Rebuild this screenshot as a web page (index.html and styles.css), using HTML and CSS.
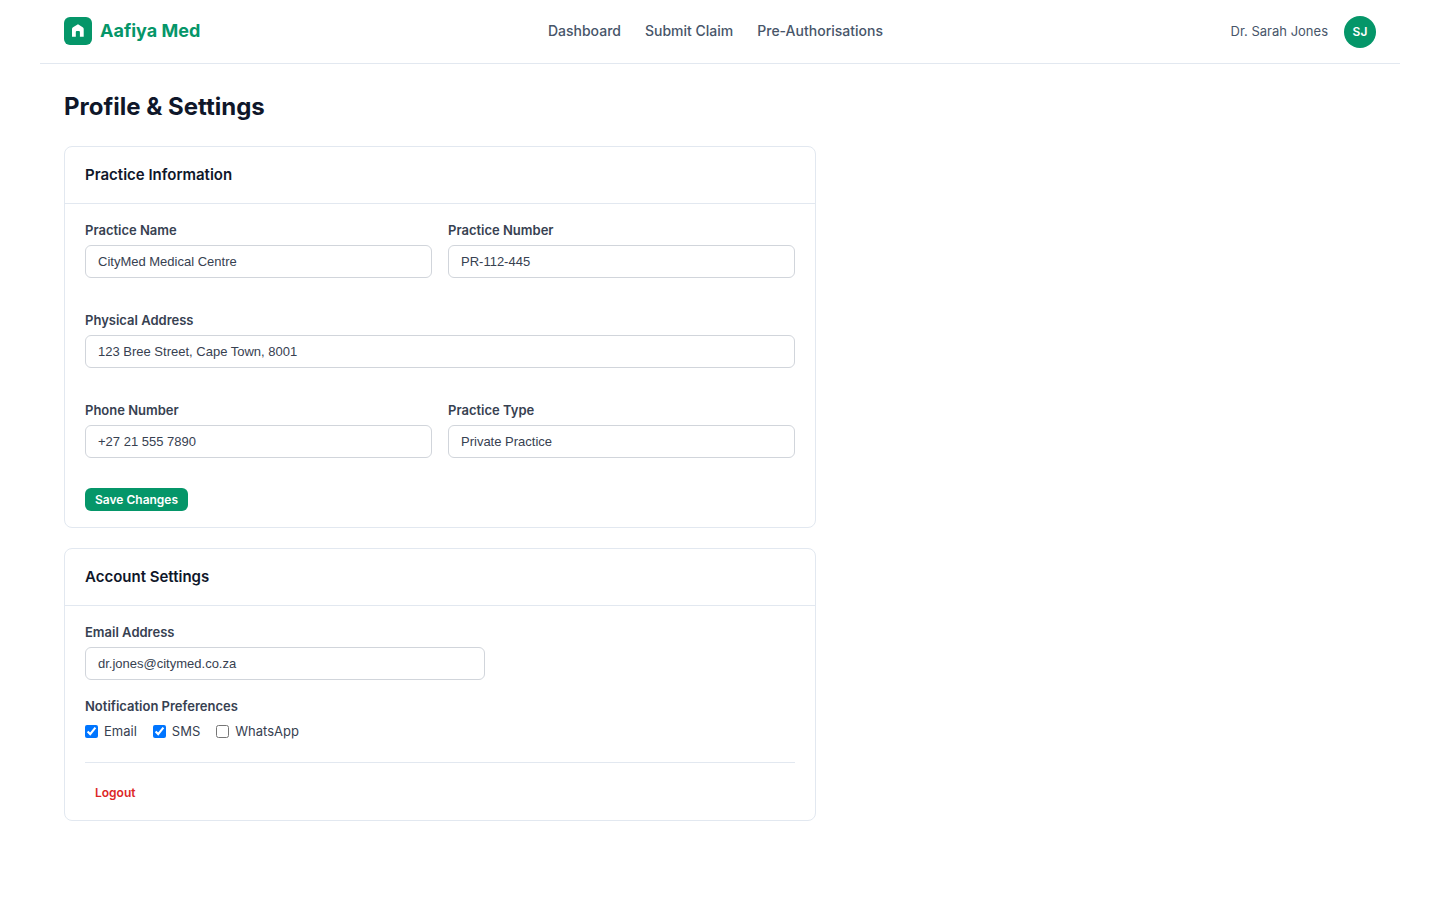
FILE: index.html
```html
<!DOCTYPE html>
<html lang="en">
<head>
  <meta charset="UTF-8">
  <title>Aafiya Med - Profile &amp; Settings</title>
  <link rel="stylesheet" href="styles.css">
</head>

<body>
  <div class="container">
    <header class="header">
      <div class="logo">
        <div class="logo-icon">
          <svg width="16" height="16" viewBox="0 0 16 16" fill="white">
            <path d="M8 1.2L3 4.2Q2 4.8 2 6v7.7h3.8V9q0-1 1-1h2.1q1 0 1 1v4.7h3.8V6q0-1.2-1-1.8z"/>
          </svg>
        </div>
        <span>Aafiya Med</span>
      </div>

      <nav class="nav">
        <a href="#">Dashboard</a>
        <a href="#">Submit Claim</a>
        <a href="#">Pre-Authorisations</a>
      </nav>

      <div class="user">
        <span class="user-name">Dr. Sarah Jones</span>
        <div class="avatar">SJ</div>
      </div>
    </header>

    <main class="main">
      <h1>Profile &amp; Settings</h1>

      <section class="card">
        <div class="card-header">
          <h2>Practice Information</h2>
        </div>
        <div class="card-body">
          <div class="form-grid">
            <div class="form-group">
              <label for="practiceName">Practice Name</label>
              <input type="text" id="practiceName" value="CityMed Medical Centre">
            </div>
            <div class="form-group">
              <label for="practiceNumber">Practice Number</label>
              <input type="text" id="practiceNumber" value="PR-112-445">
            </div>
            <div class="form-group full">
              <label for="address">Physical Address</label>
              <input type="text" id="address" value="123 Bree Street, Cape Town, 8001">
            </div>
            <div class="form-group">
              <label for="phone">Phone Number</label>
              <input type="text" id="phone" value="+27 21 555 7890">
            </div>
            <div class="form-group">
              <label for="practiceType">Practice Type</label>
              <input type="text" id="practiceType" value="Private Practice">
            </div>
          </div>
          <button class="btn btn-primary">Save Changes</button>
        </div>
      </section>

      <section class="card">
        <div class="card-header">
          <h2>Account Settings</h2>
        </div>
        <div class="card-body">
          <div class="form-group email">
            <label for="email">Email Address</label>
            <input type="email" id="email" value="dr.jones@citymed.co.za">
          </div>
          <div class="form-group">
            <label>Notification Preferences</label>
            <div class="checkboxes">
              <label class="check"><input type="checkbox" checked> Email</label>
              <label class="check"><input type="checkbox" checked> SMS</label>
              <label class="check"><input type="checkbox"> WhatsApp</label>
            </div>
          </div>
          <div class="card-footer">
            <button class="btn btn-logout">Logout</button>
          </div>
        </div>
      </section>
    </main>
  </div>
</body>
</html>
```
FILE: styles.css
```css
* {
  margin: 0;
  padding: 0;
  box-sizing: border-box;
}

body {
  font-family: Inter, sans-serif;
  font-size: 14px;
  line-height: 1.5;
  color: #374151;
  background: #ffffff;
}

.container {
  max-width: 1360px;
  margin: 0 auto;
}

/* Header */
.header {
  display: flex;
  align-items: center;
  justify-content: space-between;
  height: 64px;
  padding: 0 24px;
  border-bottom: 1px solid #e2e8f0;
}

.logo {
  display: flex;
  align-items: center;
  gap: 8px;
  margin-bottom: 2px;
  font-size: 18px;
  font-weight: 700;
  color: #059669;
}

.logo-icon {
  display: flex;
  align-items: center;
  justify-content: center;
  width: 28px;
  height: 28px;
  background: #059669;
  border-radius: 6px;
}

.nav {
  display: flex;
  gap: 24px;
  margin-bottom: 2px;
}

.nav a {
  color: #475569;
  font-weight: 500;
  text-decoration: none;
}

.user {
  display: flex;
  align-items: center;
  gap: 16px;
}

.user-name {
  font-size: 13px;
  color: #475569;
}

.avatar {
  display: flex;
  align-items: center;
  justify-content: center;
  width: 32px;
  height: 32px;
  border-radius: 50%;
  background: #059669;
  color: white;
  font-size: 12px;
  font-weight: 600;
}

/* Page */
.main {
  padding: 24px;
}

h1 {
  margin-bottom: 20px;
  font-size: 24px;
  font-weight: 700;
  line-height: 38px;
  color: #0f172a;
}

.card {
  width: 752px;
  margin-bottom: 20px;
  border: 1px solid #e2e8f0;
  border-radius: 8px;
}

.card-header {
  display: flex;
  align-items: center;
  height: 57px;
  padding: 0 20px;
  border-bottom: 1px solid #e2e8f0;
}

h2 {
  font-size: 15px;
  font-weight: 600;
  color: #0f172a;
}

.card-body {
  padding: 16px 20px;
}

/* Forms */
.form-grid {
  display: grid;
  grid-template-columns: 1fr 1fr;
  gap: 32px 16px;
  margin-bottom: 30px;
}

.form-group.full {
  grid-column: 1 / -1;
}

.form-group.email {
  max-width: 400px;
  margin-bottom: 16px;
}

.form-group > label {
  display: block;
  margin-bottom: 5px;
  font-size: 13px;
  font-weight: 600;
  line-height: 20px;
}

.form-group > input {
  display: block;
  width: 100%;
  height: 33px;
  padding: 8px 12px;
  border: 1px solid #d1d5db;
  border-radius: 6px;
  background: white;
  color: #374151;
  font-family: "Liberation Sans", Arial, sans-serif;
  font-size: 13px;
}

.checkboxes {
  display: flex;
  gap: 16px;
}

.check {
  display: flex;
  align-items: center;
  gap: 6px;
  font-size: 13px;
  line-height: 21px;
}

.btn {
  display: block;
  height: 23px;
  padding: 0 10px;
  border: none;
  border-radius: 6px;
  font-family: inherit;
  font-size: 12px;
  font-weight: 600;
  cursor: pointer;
}

.btn-primary {
  background: #059669;
  color: white;
}

.btn-logout {
  background: none;
  color: #dc2626;
}

.card-footer {
  margin-top: 20px;
  padding-top: 18px;
  border-top: 1px solid #e2e8f0;
}
```
